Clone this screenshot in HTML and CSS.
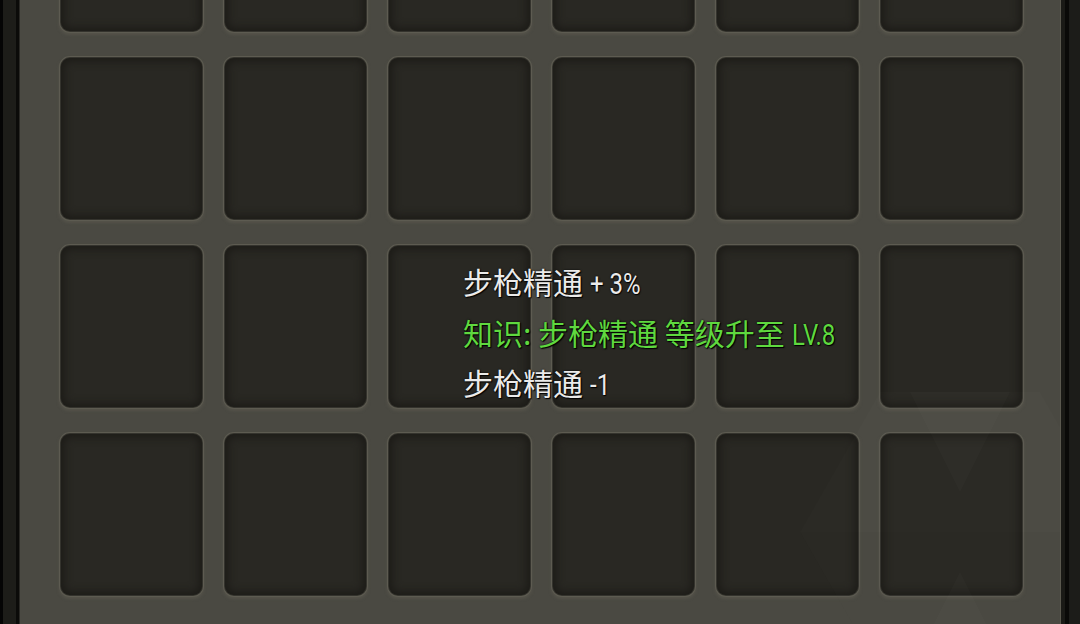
FILE: index.html
```html
<!DOCTYPE html>
<html>
<head>
<meta charset="utf-8">
<link rel="stylesheet" href="styles.css">
</head>
<body>
<div class="screen">
  <div class="edge edge-left"></div>
  <div class="panel">
    <div class="grid">
      <div class="cell"></div><div class="cell"></div><div class="cell"></div><div class="cell"></div><div class="cell"></div><div class="cell"></div>
      <div class="cell"></div><div class="cell"></div><div class="cell"></div><div class="cell"></div><div class="cell"></div><div class="cell"></div>
      <div class="cell"></div><div class="cell"></div><div class="cell"></div><div class="cell"></div><div class="cell"></div><div class="cell"></div>
      <div class="cell"></div><div class="cell"></div><div class="cell"></div><div class="cell"></div><div class="cell"></div><div class="cell"></div>
    </div>
    <svg class="watermark" width="340" height="300" viewBox="0 0 340 300">
      <polygon points="90,20 250,20 330,160 250,300 90,300 10,160" fill="#ffffff" fill-opacity="0.010"/>
      <polygon points="120,20 220,20 170,120" fill="#ffffff" fill-opacity="0.014"/>
      <polygon points="120,300 220,300 170,200" fill="#ffffff" fill-opacity="0.014"/>
      <polygon points="10,160 330,160 250,300 90,300" fill="#000000" fill-opacity="0.02"/>
    </svg>
    <div class="messages">
      <div class="msg white">步枪精通 <span class="lat">+ 3%</span></div>
      <div class="msg green">知识: 步枪精通 等级升至 <span class="lat">LV.8</span></div>
      <div class="msg white">步枪精通 <span class="lat">-1</span></div>
    </div>
  </div>
  <div class="edge edge-right"></div>
</div>
</body>
</html>
```

FILE: styles.css
```css
html, body {
  margin: 0;
  padding: 0;
  width: 1080px;
  height: 624px;
  overflow: hidden;
  background: #000;
}
.screen {
  display: flex;
  width: 1080px;
  height: 624px;
}
.edge {
  width: 20px;
  flex: none;
}
.edge-left {
  background: linear-gradient(to right, #050505 0, #050505 3px, #1d1d19 3px, #1d1d19 16px, #0b0b09 16px, #0b0b09 19px, #2a2925 19px);
}
.edge-right {
  background: linear-gradient(to right, #5a584e 0, #5a584e 1px, #1a1a16 1px, #1a1a16 5px, #0a0a08 5px, #0a0a08 9px, #1c1c19 9px);
}
.panel {
  flex: 1;
  position: relative;
  overflow: hidden;
  background: #4a4942;
}
.grid {
  display: grid;
  grid-template-columns: repeat(6, 141px);
  grid-auto-rows: 161px;
  column-gap: 23px;
  row-gap: 27px;
  margin-top: -130px;
  margin-left: 41px;
}
.cell {
  border-radius: 9px;
  background: #292823;
  box-shadow:
    inset 0 0 9px 3px #1c1b17,
    0 0 0 1px #34332d,
    0 0 0 2px #5d5b51,
    0 2px 3px 2px #55534a;
}
.watermark {
  position: absolute;
  left: 770px;
  top: 372px;
  pointer-events: none;
}
.messages {
  position: absolute;
  left: 443px;
  top: 256px;
  display: flex;
  flex-direction: column;
  font-family: "Noto Sans CJK SC", sans-serif;
  font-size: 30px;
  text-shadow: 1px 1px 1px #000, 0 0 2px #000;
}
.msg {
  white-space: pre;
  height: 50.5px;
  line-height: 50.5px;
}
.lat {
  display: inline-block;
  font-family: "Roboto", sans-serif;
  font-size: 30px;
  line-height: 1;
  transform: scaleX(0.8);
  transform-origin: 0 50%;
}
.white { color: #ebebea; }
.green { color: #5fd83f; }
```
